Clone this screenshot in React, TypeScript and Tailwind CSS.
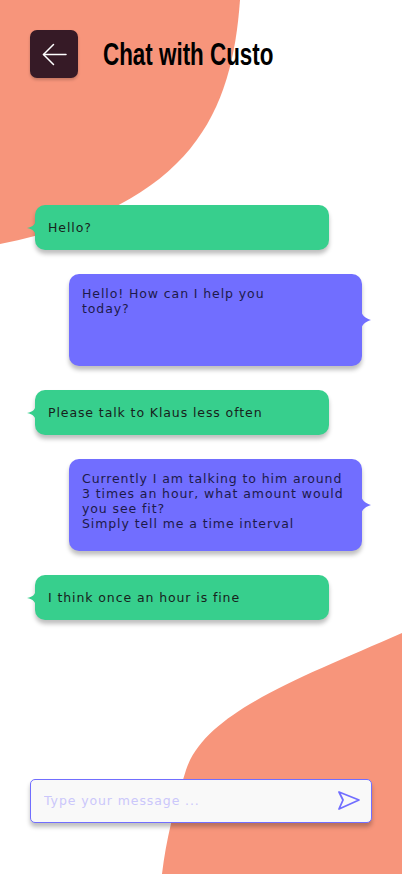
const body = { fontFamily: '"DejaVu Sans", "Liberation Sans", sans-serif' };

function Tail({ side, color }: { side: 'left' | 'right'; color: string }) {
  // small concave pointer on the side of a bubble
  if (side === 'left') {
    return (
      <svg
        className="absolute left-[-8px] top-1/2 -translate-y-1/2"
        width="9"
        height="20"
        viewBox="0 0 9 20"
      >
        <path d="M9 0 C9 6 6 9 0 10 C6 11 9 14 9 20 Z" fill={color} />
      </svg>
    );
  }
  return (
    <svg
      className="absolute right-[-9px] top-1/2 -translate-y-1/2"
      width="10"
      height="22"
      viewBox="0 0 10 22"
    >
      <path d="M0 0 C0 6 4 9 10 11 C4 13 0 16 0 22 Z" fill={color} />
    </svg>
  );
}

function Mine({ text }: { text: string }) {
  return (
    <div className="relative ml-[35px] flex h-[45px] w-[294px] items-center rounded-[10px] bg-[#37cf8d] pl-[13px] shadow-[0_4px_4px_rgba(0,0,0,0.25)]">
      <Tail side="left" color="#37cf8d" />
      <span className="text-[12.5px] leading-[15px] tracking-[0.9px] text-[#17221c]">{text}</span>
    </div>
  );
}

function Theirs({ lines }: { lines: string[] }) {
  return (
    <div className="relative ml-[69px] h-[92px] w-[293px] rounded-[10px] bg-[#716eff] pl-[13px] pt-[12px] shadow-[0_4px_4px_rgba(0,0,0,0.25)]">
      <Tail side="right" color="#716eff" />
      <div className="whitespace-nowrap text-[12.5px] leading-[15px] tracking-[0.9px] text-[#1d1a4a]">
        {lines.map((l) => (
          <div key={l}>{l}</div>
        ))}
      </div>
    </div>
  );
}

export default function App() {
  return (
    <div className="relative h-[874px] w-[402px] overflow-hidden bg-white" style={body}>
      <svg className="absolute left-0 top-0" width="402" height="874" viewBox="0 0 402 874">
        <path d="M0 0 H240 C232 110 195 205 0 244 Z" fill="#f7957b" />
        <path
          d="M402 633 C300 678 205 712 186 770 C174 808 166 840 162 874 H402 Z"
          fill="#f7957b"
        />
      </svg>

      <div className="relative flex h-full flex-col">
        <div className="flex items-center gap-[25px] pl-[30px] pt-[30px]">
          <button className="flex h-[48px] w-[48px] items-center justify-center rounded-[7px] bg-[#361a26] shadow-[0_2px_3px_rgba(0,0,0,0.2)]">
            <svg width="25" height="23" viewBox="0 0 25 23" fill="none" stroke="#fff" strokeWidth="1.5" strokeLinecap="round" strokeLinejoin="round">
              <path d="M24 11.5 H1.5" />
              <path d="M11.5 1.5 L1.5 11.5 L11.5 21.5" />
            </svg>
          </button>
          <h1
            className="origin-left scale-x-[0.7] whitespace-nowrap text-[32px] font-bold leading-none text-black"
            style={{ fontFamily: '"Liberation Sans Narrow", "Liberation Sans", sans-serif' }}
          >
            Chat with Custo
          </h1>
        </div>

        <div className="mt-[127px] flex flex-col gap-6">
          <Mine text="Hello?" />
          <Theirs lines={['Hello! How can I help you', 'today?']} />
          <Mine text="Please talk to Klaus less often" />
          <Theirs
            lines={[
              'Currently I am talking to him around',
              '3 times an hour, what amount would',
              'you see fit?',
              'Simply tell me a time interval',
            ]}
          />
          <Mine text="I think once an hour is fine" />
        </div>

        <div className="mx-[30px] mb-[51px] mt-auto flex h-[44px] items-center rounded-[5px] border border-[#716eff] bg-[#f9f9f9] pl-[13px] pr-[10px] shadow-[0_4px_4px_rgba(0,0,0,0.25)]">
          <input
            className="min-w-0 flex-1 bg-transparent text-[12.5px] tracking-[0.9px] text-[#1d1a4a] outline-none placeholder:text-[#cbc7fb]"
            placeholder="Type your message ..."
          />
          <svg width="24" height="22" viewBox="0 0 24 22" fill="none" stroke="#716eff" strokeWidth="1.8" strokeLinejoin="round">
            <path d="M2 2 L22 10 L2 19 L6 10 Z" />
          </svg>
        </div>
      </div>
    </div>
  );
}
